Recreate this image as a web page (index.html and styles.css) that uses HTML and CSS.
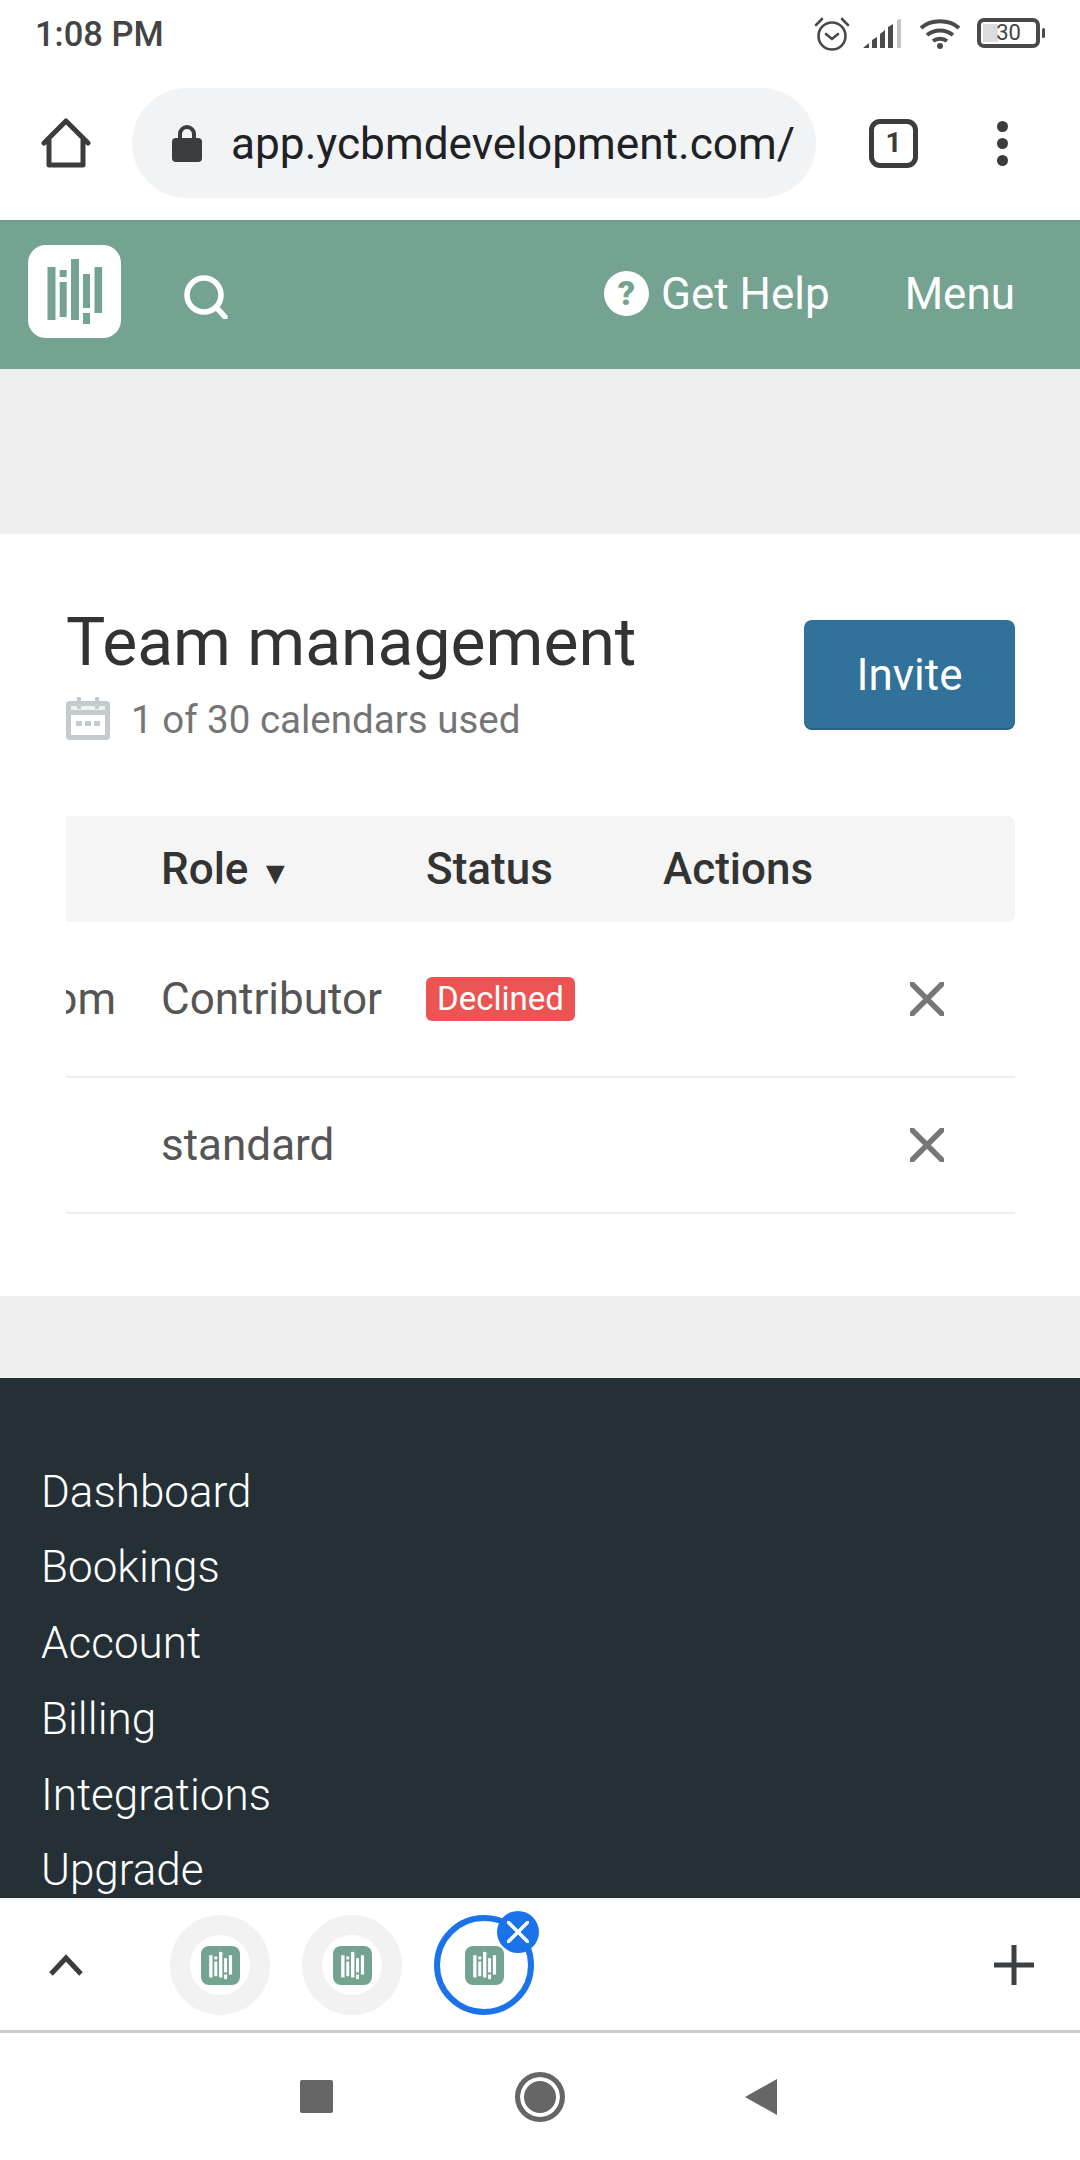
FILE: index.html
```html
<!DOCTYPE html>
<html lang="en">
<head>
<meta charset="utf-8">
<title>Team management</title>
<link rel="stylesheet" href="styles.css">
</head>
<body>
<svg class="defs" width="0" height="0" aria-hidden="true">
  <symbol id="bars" viewBox="0 0 93 93">
    <rect x="19.5" y="22" width="8" height="53"/>
    <rect x="31.7" y="25" width="7" height="7"/>
    <rect x="31.7" y="37" width="7" height="35"/>
    <rect x="43" y="14" width="8" height="61"/>
    <rect x="55" y="29" width="7" height="34"/>
    <rect x="55" y="68" width="7" height="11"/>
    <rect x="66.5" y="22" width="7.6" height="46"/>
  </symbol>
  <symbol id="cross" viewBox="0 0 34 34">
    <path d="M2 2 32 32M32 2 2 32" fill="none" stroke="currentColor" stroke-width="5.400" stroke-linecap="round"/>
  </symbol>
</svg>
<div class="phone">
  <div class="statusbar">
    <span class="time">1:08 PM</span>
    <div class="status-icons">
      <svg class="ic-alarm" viewBox="0 0 36 36" fill="none" stroke="#4a4a4a" stroke-width="2.6"><circle cx="18" cy="20" r="13.500"/><path d="M12 18l6 5 6-5" stroke-linecap="round" stroke-linejoin="round"/><path d="M2 9 8 3M34 9 28 3" stroke-linecap="round"/></svg>
      <svg class="ic-signal" viewBox="0 0 40 30"><path fill="#4a4a4a" d="M0 29l6-5v5zM9 21l5-3v11H9zM17 15l5-4v18h-5zM25 8l5-3v24h-5z"/><path fill="#c4c4c4" d="M34 1l4-1v29h-4z"/></svg>
      <svg class="ic-wifi" viewBox="0 0 42 31" fill="none" stroke="#4a4a4a" stroke-width="4"><path d="M2 10C12 1 30 1 40 10M8 17c8-6 18-6 26 0M14 23c4-3 10-3 14 0"/><circle cx="21" cy="28" r="3" fill="#4a4a4a" stroke="none"/></svg>
      <div class="battery"><span class="battery-fill"></span><span class="battery-num">30</span></div>
      <span class="battery-nib"></span>
    </div>
  </div>

  <div class="toolbar">
    <svg class="ic-home" viewBox="0 0 50 50" fill="none" stroke="#3c3c3c" stroke-width="5" stroke-linejoin="round" stroke-linecap="round"><path d="M3 25 25 3l22 22M8 22v25h34V22"/></svg>
    <div class="omnibox">
      <svg class="ic-lock" viewBox="0 0 30 38"><path fill="none" stroke="#3a3d40" stroke-width="4" d="M8 16V10a7 7 0 0 1 14 0v6"/><rect y="14" width="30" height="24" rx="4" fill="#3a3d40"/></svg>
      <span class="url">app.ycbmdevelopment.com/</span>
    </div>
    <div class="tabcount">1</div>
    <div class="dots"><i></i><i></i><i></i></div>
  </div>

  <header class="appbar">
    <div class="logo"><svg viewBox="0 0 93 93"><use href="#bars"/></svg></div>
    <svg class="ic-search" viewBox="0 0 44 44" fill="none" stroke="#fff" stroke-width="5.600" stroke-linecap="round"><circle cx="20" cy="20" r="17"/><path d="M32 32 41 42"/></svg>
    <div class="help">
      <span class="help-q">?</span>
      <span>Get Help</span>
    </div>
    <span class="menu">Menu</span>
  </header>

  <div class="band-top"></div>

  <main class="card">
    <div class="card-head">
      <div class="titles">
        <h1>Team management</h1>
        <p class="usage">
          <svg class="ic-cal" viewBox="0 0 44 44"><path fill="#c3cbcf" d="M4 5h7V1h4v4h14V1h4v4h7a4 4 0 0 1 4 4v31a4 4 0 0 1-4 4H4a4 4 0 0 1-4-4V9a4 4 0 0 1 4-4z"/><path fill="#fff" d="M5 19h34v19a1 1 0 0 1-1 1H6a1 1 0 0 1-1-1z"/><path fill="#eef1f2" d="M5 10h6v3h4v-3h14v3h4v-3h6v4H5z"/><path fill="#c3cbcf" d="M10 25h6v5h-6zM19 25h6v5h-6zM28 25h6v5h-6z"/></svg>
          <span>1 of 30 calendars used</span>
        </p>
      </div>
      <button class="invite">Invite</button>
    </div>

    <div class="table">
      <div class="row thead">
        <div class="c0"></div>
        <div class="c1">Role <span class="caret">▼</span></div>
        <div class="c2">Status</div>
        <div class="c3">Actions</div>
      </div>
      <div class="row r1">
        <div class="c0"><span>om</span></div>
        <div class="c1">Contributor</div>
        <div class="c2"><span class="badge">Declined</span></div>
        <div class="c3"><svg class="x"><use href="#cross"/></svg></div>
      </div>
      <div class="row r2">
        <div class="c0"></div>
        <div class="c1">standard</div>
        <div class="c2"></div>
        <div class="c3"><svg class="x"><use href="#cross"/></svg></div>
      </div>
    </div>
  </main>

  <div class="band-bottom"></div>

  <footer class="footer">
    <a>Dashboard</a>
    <a>Bookings</a>
    <a>Account</a>
    <a>Billing</a>
    <a>Integrations</a>
    <a>Upgrade</a>
  </footer>

  <div class="tabstrip">
    <svg class="ic-chev" viewBox="0 0 34 22" fill="none" stroke="#3c3c3c" stroke-width="5"><path d="M2 20 17 4l15 16"/></svg>
    <div class="tab"><span class="fav"><svg viewBox="0 0 93 93"><use href="#bars"/></svg></span></div>
    <div class="tab"><span class="fav"><svg viewBox="0 0 93 93"><use href="#bars"/></svg></span></div>
    <div class="tab tab-active">
      <span class="fav"><svg viewBox="0 0 93 93"><use href="#bars"/></svg></span>
      <span class="tab-close"><svg viewBox="0 0 34 34" class="tab-x"><use href="#cross"/></svg></span>
    </div>
    <svg class="ic-plus" viewBox="0 0 40 40"><path fill="#3c4043" d="M17.500 0h5v17.500H40v5H22.500V40h-5V22.500H0v-5h17.500z"/></svg>
  </div>

  <nav class="navbar">
    <span class="nav-square"></span>
    <span class="nav-home"></span>
    <svg class="nav-back" viewBox="0 0 32 36"><path fill="#666" d="M32 0v36L0 18z"/></svg>
  </nav>
</div>
</body>
</html>
```
FILE: styles.css
```css
* { box-sizing: border-box; }
html, body { margin: 0; padding: 0; background: #fff; }
body { font-family: Roboto, "Noto Sans", sans-serif; color: #333; }
.defs { display: block; height: 0; }
.phone { width: 1080px; height: 2160px; display: flex; flex-direction: column; overflow: hidden; }

.statusbar { height: 64px; flex: none; display: flex; align-items: flex-start; padding: 16px 35px 0 35px; justify-content: space-between; }
.time { font-size: 34.500px; line-height: 36px; font-weight: 500; color: #444; }
.status-icons { display: flex; align-items: flex-start; }
.ic-alarm { width: 36px; height: 36px; margin-right: 13px; }
.ic-signal { width: 40px; height: 30px; margin: 3px 16px 0 0; }
.ic-wifi { width: 42px; height: 31px; margin: 2px 16px 0 0; }
.battery { width: 63px; height: 30px; border: 4px solid #4a4a4a; border-radius: 7px; margin-top: 2px; position: relative; display: flex; align-items: center; justify-content: center; }
.battery-fill { position: absolute; left: 2px; top: 2px; bottom: 2px; width: 15px; background: #dcdcdc; }
.battery-num { position: relative; font-size: 22px; line-height: 22px; color: #444; }
.battery-nib { width: 3px; height: 10px; background: #4a4a4a; margin: 12px 0 0 2px; border-radius: 2px; }

.toolbar { height: 156px; flex: none; display: flex; align-items: center; padding: 0 0 0 41px; }
.ic-home { width: 50px; height: 50px; flex: none; margin: 2px 41px 0 0; }
.omnibox { width: 684px; height: 110px; flex: none; margin-top: 2px; border-radius: 55px; background: #f1f3f4; display: flex; align-items: center; padding-left: 40px; }
.ic-lock { width: 30px; height: 38px; flex: none; margin-right: 29px; }
.url { font-size: 44.200px; color: #202124; white-space: nowrap; margin-top: 2px; }
.tabcount { width: 49px; height: 49px; flex: none; margin: 2px 0 0 53px; border: 5px solid #3c3c3c; border-radius: 11px; font-size: 28px; font-weight: 700; line-height: 38px; text-align: center; color: #3c3c3c; }
.dots { margin: 2px 0 0 79px; width: 12px; display: flex; flex-direction: column; gap: 6px; }
.dots i { width: 11px; height: 11px; border-radius: 50%; background: #3c3c3c; display: block; }

.appbar { height: 149px; flex: none; background: #74a391; display: flex; align-items: center; padding: 0 65px 0 28px; color: #fff; font-size: 44px; box-shadow: inset 0 3px 3px -2px rgba(0,0,0,.08); }
.logo { width: 93px; height: 93px; border-radius: 18px; background: #fff; fill: #74a391; flex: none; margin-top: -6px; }
.logo svg { width: 93px; height: 93px; display: block; }
.ic-search { width: 44px; height: 44px; flex: none; margin: 4px 0 0 63px; }
.help { display: flex; align-items: center; gap: 12px; margin-left: auto; margin-top: -2px; }
.help-q { width: 45px; height: 45px; border-radius: 50%; background: #fff; color: #74a391; font-size: 34px; line-height: 45px; font-weight: 900; text-align: center; }
.menu { margin-left: 75px; margin-top: -2px; }

.band-top { height: 165px; flex: none; background: #efefef; }
.band-bottom { height: 82px; flex: none; background: #efefef; }

.card { height: 762px; flex: none; background: #fff; padding: 86px 65px 0 66px; }
.card-head { display: flex; justify-content: space-between; align-items: flex-start; height: 110px; }
.titles { margin-top: -16px; }
h1 { margin: 0; font-size: 66px; line-height: 78px; font-weight: 400; color: #333; white-space: nowrap; }
.usage { margin: 16px 0 0; display: flex; align-items: center; gap: 21px; font-size: 38.500px; line-height: 44px; color: #757575; }
.ic-cal { width: 44px; height: 44px; flex: none; margin-top: -5px; }
.invite { width: 211px; height: 110px; border: 0; border-radius: 8px; background: #32719a; color: #fff; font: 400 44px Roboto, sans-serif; padding: 0; box-shadow: inset 0 -2px 0 rgba(0,0,0,.12); }

.table { margin-top: 86px; font-size: 44px; }
.row { display: grid; grid-template-columns: 95px 265px 237px 1fr; align-items: center; }
.thead { height: 106px; background: #f5f5f5; border-radius: 0 8px 8px 0; font-weight: 500; color: #333; }
.caret { font-size: 32px; margin-left: 0; }
.r1, .r2 { color: #555; border-bottom: 2px solid #eee; }
.r1 { height: 156px; }
.r2 { height: 136px; }
.c0 { overflow: hidden; display: flex; justify-content: flex-end; padding-right: 45px; white-space: nowrap; }
.c3 { display: flex; }
.badge { display: inline-block; background: #ec5454; color: #fff; font-size: 33px; line-height: 44px; height: 44px; padding: 0 11px; border-radius: 6px; vertical-align: middle; position: relative; top: -3px; }
.x { width: 34px; height: 34px; color: #777; margin-left: 247px; }

.footer { height: 520px; flex: none; overflow: hidden; background: #252f36; padding: 75.500px 0 0 41px; display: flex; flex-direction: column; }
.footer a { display: block; flex: none; height: 75.800px; font-size: 44px; line-height: 76px; font-weight: 300; color: #fff; }

.tabstrip { height: 132px; flex: none; background: #fff; display: flex; align-items: center; padding-left: 49px; position: relative; border-top: 2px solid #f2f5f6; }
.ic-chev { width: 34px; height: 22px; flex: none; margin: 0 87px 0 0; }
.tab { width: 100px; height: 100px; flex: none; margin-right: 32px; border-radius: 50%; border: 20px solid #f2f2f2; display: flex; align-items: center; justify-content: center; position: relative; }
.tab-active { border: 6px solid #1a73e8; }
.fav { width: 39px; height: 39px; flex: none; border-radius: 8px; background: #74a391; fill: #fff; display: block; }
.fav svg { width: 39px; height: 39px; display: block; }
.tab-close { position: absolute; width: 42px; height: 42px; border-radius: 50%; background: #1a73e8; top: -10px; right: -11px; color: #fff; display: flex; align-items: center; justify-content: center; }
.tab-x { width: 22px; height: 22px; }
.ic-plus { width: 40px; height: 40px; flex: none; margin-left: auto; margin-right: 46px; }

.navbar { flex: 1; background: #fff; border-top: 3px solid #ccc; display: flex; align-items: center; position: relative; padding: 0 0 0 300px; }
.nav-square { width: 33px; height: 33px; background: #666; border-radius: 2px; flex: none; }
.nav-home { width: 50px; height: 50px; border-radius: 50%; flex: none; margin: 0 0 0 182px; background: #666; border: 5px solid #666; box-shadow: inset 0 0 0 4px #fff; }
.nav-back { width: 32px; height: 36px; flex: none; margin: 0 0 0 180px; }
```
